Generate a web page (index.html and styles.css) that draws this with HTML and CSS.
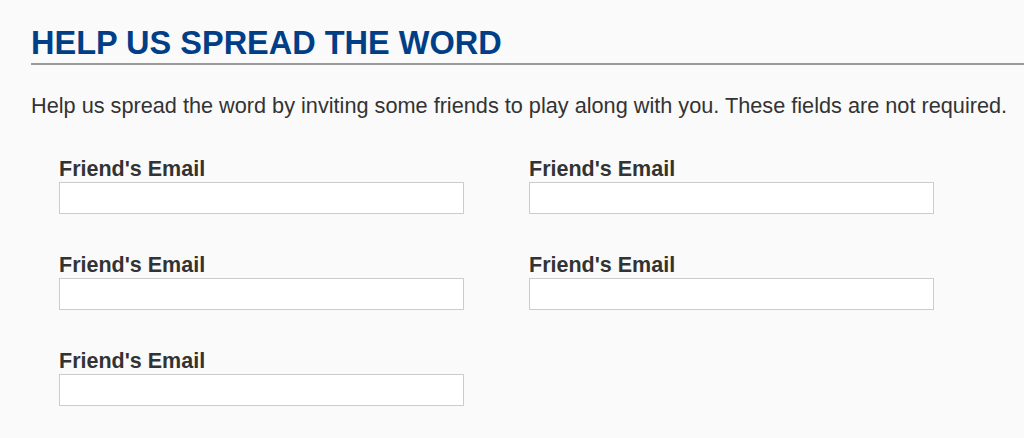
FILE: index.html
```
<!DOCTYPE html>
<html lang="en">

<head>
    <meta charset="UTF-8">
    <meta name="viewport" content="width=device-width, initial-scale=1.0">
    <title>Spread the Word</title>
    <link rel="stylesheet" href="styles.css">
</head>

<body>
    <div class="section">
        <h1 class="section-title">HELP US SPREAD THE WORD</h1>
        <p class="intro">Help us spread the word by inviting some friends to play along with you. These fields are not required.</p>
        <form class="invite-form">
            <div class="field">
                <label for="friend1">Friend's Email</label>
                <input type="email" id="friend1" name="friend1">
            </div>
            <div class="field">
                <label for="friend2">Friend's Email</label>
                <input type="email" id="friend2" name="friend2">
            </div>
            <div class="field">
                <label for="friend3">Friend's Email</label>
                <input type="email" id="friend3" name="friend3">
            </div>
            <div class="field">
                <label for="friend4">Friend's Email</label>
                <input type="email" id="friend4" name="friend4">
            </div>
            <div class="field">
                <label for="friend5">Friend's Email</label>
                <input type="email" id="friend5" name="friend5">
            </div>
        </form>
    </div>
</body>

</html>
```

FILE: styles.css
```
body {
    font-family: 'Liberation Sans', Arial, sans-serif;
    margin: 0;
    padding: 0;
    color: #333;
    background-color: #fafafa;
}

.section {
    padding: 24px 0 0 31px;
}

.section-title {
    margin: 0;
    font-size: 32.5px;
    line-height: 39px;
    font-weight: 700;
    color: #003f87;
    border-bottom: 2px solid #999;
}

.intro {
    margin: 28px 0 0;
    font-size: 21.7px;
    line-height: 26px;
}

.invite-form {
    display: grid;
    grid-template-columns: 405px 405px;
    column-gap: 65px;
    row-gap: 39px;
    margin: 38px 0 0 28px;
}

.field label {
    display: block;
    margin-bottom: 1px;
    font-size: 21.5px;
    line-height: 24px;
    font-weight: 700;
    color: #333;
}

.field input {
    display: block;
    box-sizing: border-box;
    width: 405px;
    height: 32px;
    margin: 0;
    border: 1px solid #ccc;
    background-color: #fff;
    font-size: 16px;
}
```
